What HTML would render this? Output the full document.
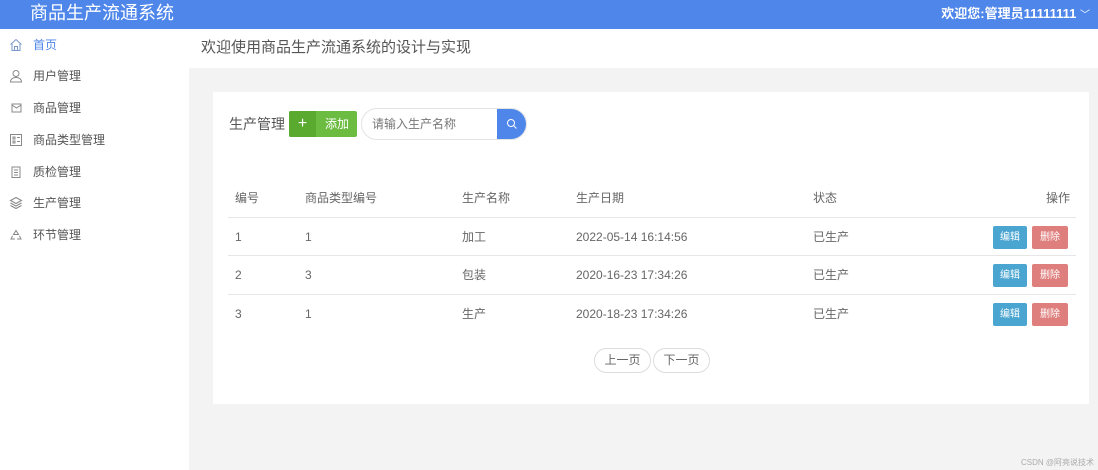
<!DOCTYPE html>
<html><head><meta charset="utf-8"><style>
*{margin:0;padding:0;box-sizing:border-box}
body{width:1098px;height:470px;overflow:hidden;font-family:"Liberation Sans","Noto Sans CJK SC",sans-serif;background:#fff;position:relative;color:#555}
div,span{line-height:1.2}
.hd{position:absolute;left:0;top:0;width:1098px;height:29px;background:#4e86ea;color:#fff}
.hd .t{position:absolute;left:30px;top:2px;font-size:18px;line-height:22px}
.hd .u{position:absolute;right:8px;top:6px;font-size:13px;font-weight:bold;line-height:16px}
.side{position:absolute;left:0;top:29px;width:189px;height:441px;background:#fff}
.side div{position:absolute;left:33px;font-size:12px;color:#555;line-height:16px}
.side svg{position:absolute;left:9px}
.main{position:absolute;left:189px;top:68px;width:909px;height:402px;background:#f3f3f3}
.ttl{position:absolute;left:201px;top:38px;font-size:15px;color:#555;line-height:20px}
.card{position:absolute;left:213px;top:92px;width:876px;height:312px;background:#fff}
.abs{position:absolute}
.line{position:absolute;left:228px;width:848px;height:1px;background:#e6e6e6}
.c{position:absolute;font-size:12px;color:#666;line-height:16px;height:16px}
.be{position:absolute;width:34px;height:23px;background:#4aa5d0;color:#fff;font-size:10px;text-align:center;line-height:23px;border-radius:2px;left:993px}
.bd{position:absolute;width:36px;height:23px;background:#de7f7d;color:#fff;font-size:10px;text-align:center;line-height:23px;border-radius:2px;left:1032px}
.pg{position:absolute;top:348px;height:25px;width:57px;border:1px solid #ddd;border-radius:13px;font-size:12px;text-align:center;line-height:23px;color:#666}
</style></head><body>
<div class="hd"><span class="t">商品生产流通系统</span><span class="u">欢迎您:管理员11111111 <span style="font-weight:normal;font-size:10px">﹀</span></span></div>
<div class="side">
<svg width="14" height="14" style="top:9px" viewBox="0 0 14 14" fill="none" stroke="#7a9acb"><path d="M1.5 6.5L7 1.5l5.5 5M3 5.5v7h8v-7M5.5 12.5v-4h3v4"/></svg><div style="top:8px;color:#4e86ea">首页</div>
<svg width="14" height="14" style="top:40px" viewBox="0 0 14 14" fill="none" stroke="#888"><circle cx="7" cy="4.5" r="3"/><path d="M1.5 13c0-3 2.5-4.5 5.5-4.5s5.5 1.5 5.5 4.5z"/></svg><div style="top:39px">用户管理</div>
<svg width="14" height="14" style="top:72px" viewBox="0 0 14 14" fill="none" stroke="#888"><rect x="3" y="3" width="9" height="8"/><path d="M3 4l4.5 3L12 4"/></svg><div style="top:71px">商品管理</div>
<svg width="14" height="14" style="top:104px" viewBox="0 0 14 14" fill="none" stroke="#888"><rect x="1.5" y="1.5" width="11" height="11"/><path d="M4 4h2v2H4zM4 8h2v2H4zM8 4.5h3M8 8.5h3"/></svg><div style="top:103px">商品类型管理</div>
<svg width="14" height="14" style="top:136px" viewBox="0 0 14 14" fill="none" stroke="#888"><rect x="3" y="2" width="8" height="10.5"/><path d="M5 5h4M5 7.5h4M5 10h4"/></svg><div style="top:135px">质检管理</div>
<svg width="14" height="14" style="top:167px" viewBox="0 0 14 14" fill="none" stroke="#888"><path d="M7 1.5l5.5 3L7 7.5 1.5 4.5zM1.5 7l5.5 3 5.5-3M1.5 9.5l5.5 3 5.5-3"/></svg><div style="top:166px">生产管理</div>
<svg width="14" height="14" style="top:199px" viewBox="0 0 14 14" fill="none" stroke="#888"><path d="M7 2.5l2.5 4h-5zM3.5 8L2 11h4M10.5 8l1.5 3H8"/></svg><div style="top:198px">环节管理</div>
</div>
<div class="ttl">欢迎使用商品生产流通系统的设计与实现</div>
<div class="main"></div>
<div class="card"></div>
<div class="abs" style="left:229px;top:114px;font-size:14px;color:#555;line-height:20px">生产管理</div>
<div class="abs" style="left:289px;top:111px;width:68px;height:26px;background:#6dbc42;border-radius:2px;color:#fff;font-size:12px">
<div class="abs" style="left:0;top:0;width:27px;height:26px;background:#5aaa30;border-radius:2px 0 0 2px;text-align:center;line-height:26px;font-size:16px">+</div>
<div class="abs" style="left:36px;top:5px;line-height:16px">添加</div></div>
<div class="abs" style="left:361px;top:108px;width:166px;height:32px;border:1px solid #e3e3e3;border-radius:16px;overflow:hidden">
<div class="abs" style="left:10px;top:7px;font-size:12px;color:#777;line-height:16px">请输入生产名称</div>
<div class="abs" style="left:135px;top:0;width:31px;height:32px;background:#4e86ea"><svg width="12" height="12" style="position:absolute;left:9px;top:9px" viewBox="0 0 12 12" fill="none" stroke="#fff"><circle cx="5" cy="5" r="3.5"/><path d="M7.5 7.5L10.5 10.5"/></svg></div></div>
<div class="c" style="left:235px;top:190px">编号</div><div class="c" style="left:305px;top:190px">商品类型编号</div><div class="c" style="left:462px;top:190px">生产名称</div><div class="c" style="left:576px;top:190px">生产日期</div><div class="c" style="left:813px;top:190px">状态</div><div class="c" style="left:1046px;top:190px">操作</div>
<div class="line" style="top:217px"></div><div class="line" style="top:255px"></div><div class="line" style="top:294px"></div>
<div class="c" style="left:235px;top:229px">1</div><div class="c" style="left:305px;top:229px">1</div><div class="c" style="left:462px;top:229px">加工</div><div class="c" style="left:576px;top:229px">2022-05-14 16:14:56</div><div class="c" style="left:813px;top:229px">已生产</div>
<div class="c" style="left:235px;top:267px">2</div><div class="c" style="left:305px;top:267px">3</div><div class="c" style="left:462px;top:267px">包装</div><div class="c" style="left:576px;top:267px">2020-16-23 17:34:26</div><div class="c" style="left:813px;top:267px">已生产</div>
<div class="c" style="left:235px;top:306px">3</div><div class="c" style="left:305px;top:306px">1</div><div class="c" style="left:462px;top:306px">生产</div><div class="c" style="left:576px;top:306px">2020-18-23 17:34:26</div><div class="c" style="left:813px;top:306px">已生产</div>
<div class="be" style="top:226px">编辑</div><div class="bd" style="top:226px">删除</div>
<div class="be" style="top:264px">编辑</div><div class="bd" style="top:264px">删除</div>
<div class="be" style="top:303px">编辑</div><div class="bd" style="top:303px">删除</div>
<div class="pg" style="left:594px">上一页</div><div class="pg" style="left:653px">下一页</div>
<div class="abs" style="right:4px;top:458px;font-size:8px;color:#aaa;line-height:10px">CSDN @阿亮说技术</div>
</body></html>
